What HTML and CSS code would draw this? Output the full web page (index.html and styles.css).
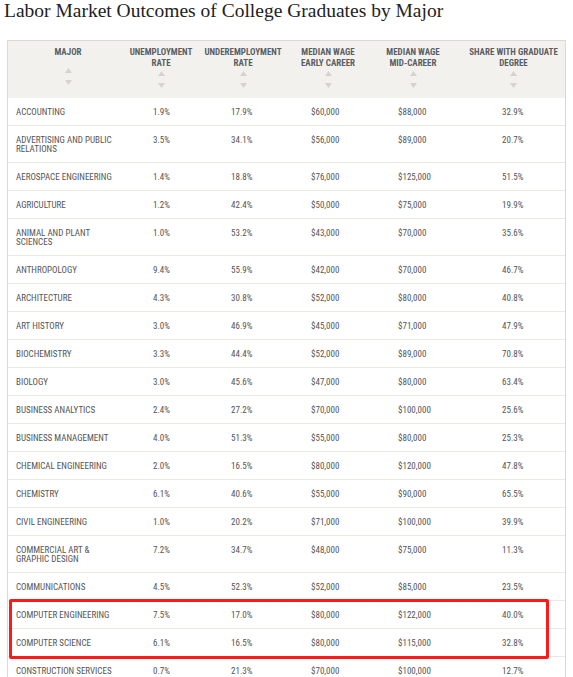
FILE: index.html
```html
<!DOCTYPE html>
<html lang="en">
<head>
<meta charset="utf-8">
<title>Labor Market Outcomes of College Graduates by Major</title>
<link rel="stylesheet" href="styles.css">
</head>
<body>
<h1 class="title">Labor Market Outcomes of College Graduates by Major</h1>
<div class="table">
  <div class="thead">
    <div class="th th-single"><div class="th-label">MAJOR</div><svg class="sort" width="7" height="17" viewBox="0 0 7 17"><path d="M3.5 0 L7 5 L0 5 Z"/><path d="M0 12 L7 12 L3.5 17 Z"/></svg></div>
    <div class="th"><div class="th-label">UNEMPLOYMENT<br>RATE</div><svg class="sort" width="7" height="17" viewBox="0 0 7 17"><path d="M3.5 0 L7 5 L0 5 Z"/><path d="M0 12 L7 12 L3.5 17 Z"/></svg></div>
    <div class="th"><div class="th-label">UNDEREMPLOYMENT<br>RATE</div><svg class="sort" width="7" height="17" viewBox="0 0 7 17"><path d="M3.5 0 L7 5 L0 5 Z"/><path d="M0 12 L7 12 L3.5 17 Z"/></svg></div>
    <div class="th"><div class="th-label">MEDIAN WAGE<br>EARLY CAREER</div><svg class="sort" width="7" height="17" viewBox="0 0 7 17"><path d="M3.5 0 L7 5 L0 5 Z"/><path d="M0 12 L7 12 L3.5 17 Z"/></svg></div>
    <div class="th"><div class="th-label">MEDIAN WAGE<br>MID-CAREER</div><svg class="sort" width="7" height="17" viewBox="0 0 7 17"><path d="M3.5 0 L7 5 L0 5 Z"/><path d="M0 12 L7 12 L3.5 17 Z"/></svg></div>
    <div class="th"><div class="th-label">SHARE WITH GRADUATE<br>DEGREE</div><svg class="sort" width="7" height="17" viewBox="0 0 7 17"><path d="M3.5 0 L7 5 L0 5 Z"/><path d="M0 12 L7 12 L3.5 17 Z"/></svg></div>
  </div>
  <div class="tbody">
    <div class="row"><div class="cell major">ACCOUNTING</div><div class="cell">1.9%</div><div class="cell">17.9%</div><div class="cell">$60,000</div><div class="cell">$88,000</div><div class="cell">32.9%</div></div>
    <div class="row"><div class="cell major">ADVERTISING AND PUBLIC RELATIONS</div><div class="cell">3.5%</div><div class="cell">34.1%</div><div class="cell">$56,000</div><div class="cell">$89,000</div><div class="cell">20.7%</div></div>
    <div class="row"><div class="cell major">AEROSPACE ENGINEERING</div><div class="cell">1.4%</div><div class="cell">18.8%</div><div class="cell">$76,000</div><div class="cell">$125,000</div><div class="cell">51.5%</div></div>
    <div class="row"><div class="cell major">AGRICULTURE</div><div class="cell">1.2%</div><div class="cell">42.4%</div><div class="cell">$50,000</div><div class="cell">$75,000</div><div class="cell">19.9%</div></div>
    <div class="row"><div class="cell major">ANIMAL AND PLANT SCIENCES</div><div class="cell">1.0%</div><div class="cell">53.2%</div><div class="cell">$43,000</div><div class="cell">$70,000</div><div class="cell">35.6%</div></div>
    <div class="row"><div class="cell major">ANTHROPOLOGY</div><div class="cell">9.4%</div><div class="cell">55.9%</div><div class="cell">$42,000</div><div class="cell">$70,000</div><div class="cell">46.7%</div></div>
    <div class="row"><div class="cell major">ARCHITECTURE</div><div class="cell">4.3%</div><div class="cell">30.8%</div><div class="cell">$52,000</div><div class="cell">$80,000</div><div class="cell">40.8%</div></div>
    <div class="row"><div class="cell major">ART HISTORY</div><div class="cell">3.0%</div><div class="cell">46.9%</div><div class="cell">$45,000</div><div class="cell">$71,000</div><div class="cell">47.9%</div></div>
    <div class="row"><div class="cell major">BIOCHEMISTRY</div><div class="cell">3.3%</div><div class="cell">44.4%</div><div class="cell">$52,000</div><div class="cell">$89,000</div><div class="cell">70.8%</div></div>
    <div class="row"><div class="cell major">BIOLOGY</div><div class="cell">3.0%</div><div class="cell">45.6%</div><div class="cell">$47,000</div><div class="cell">$80,000</div><div class="cell">63.4%</div></div>
    <div class="row"><div class="cell major">BUSINESS ANALYTICS</div><div class="cell">2.4%</div><div class="cell">27.2%</div><div class="cell">$70,000</div><div class="cell">$100,000</div><div class="cell">25.6%</div></div>
    <div class="row"><div class="cell major">BUSINESS MANAGEMENT</div><div class="cell">4.0%</div><div class="cell">51.3%</div><div class="cell">$55,000</div><div class="cell">$80,000</div><div class="cell">25.3%</div></div>
    <div class="row"><div class="cell major">CHEMICAL ENGINEERING</div><div class="cell">2.0%</div><div class="cell">16.5%</div><div class="cell">$80,000</div><div class="cell">$120,000</div><div class="cell">47.8%</div></div>
    <div class="row"><div class="cell major">CHEMISTRY</div><div class="cell">6.1%</div><div class="cell">40.6%</div><div class="cell">$55,000</div><div class="cell">$90,000</div><div class="cell">65.5%</div></div>
    <div class="row"><div class="cell major">CIVIL ENGINEERING</div><div class="cell">1.0%</div><div class="cell">20.2%</div><div class="cell">$71,000</div><div class="cell">$100,000</div><div class="cell">39.9%</div></div>
    <div class="row"><div class="cell major">COMMERCIAL ART &amp; GRAPHIC DESIGN</div><div class="cell">7.2%</div><div class="cell">34.7%</div><div class="cell">$48,000</div><div class="cell">$75,000</div><div class="cell">11.3%</div></div>
    <div class="row"><div class="cell major">COMMUNICATIONS</div><div class="cell">4.5%</div><div class="cell">52.3%</div><div class="cell">$52,000</div><div class="cell">$85,000</div><div class="cell">23.5%</div></div>
    <div class="highlight">
      <div class="row"><div class="cell major">COMPUTER ENGINEERING</div><div class="cell">7.5%</div><div class="cell">17.0%</div><div class="cell">$80,000</div><div class="cell">$122,000</div><div class="cell">40.0%</div></div>
      <div class="row"><div class="cell major">COMPUTER SCIENCE</div><div class="cell">6.1%</div><div class="cell">16.5%</div><div class="cell">$80,000</div><div class="cell">$115,000</div><div class="cell">32.8%</div></div>
    </div>
    <div class="row"><div class="cell major">CONSTRUCTION SERVICES</div><div class="cell">0.7%</div><div class="cell">21.3%</div><div class="cell">$70,000</div><div class="cell">$100,000</div><div class="cell">12.7%</div></div>
  </div>
</div>
</body>
</html>
```

FILE: styles.css
```css
html {
  overflow: hidden;
  background: #ffffff;
}

body {
  margin: 0;
  padding: 0;
  background: #ffffff;
}

.title {
  margin: 0;
  padding: 0 0 0 4px;
  font-family: "Liberation Serif", "Times New Roman", serif;
  font-size: 19.5px;
  font-weight: normal;
  line-height: 22px;
  color: #222222;
}

.table {
  box-sizing: border-box;
  width: 559px;
  margin: 18px 0 0 7px;
  border-left: 1px solid #dcd8d2;
  border-right: 1px solid #dcd8d2;
  border-top: 1px solid #dcd8d2;
  font-family: Roboto, "Liberation Sans", sans-serif;
  font-stretch: 85%;
}

.thead {
  display: grid;
  grid-template-columns: 120px 66px 98px 72px 98px 1fr;
  height: 57px;
  background: #f3f1ed;
  padding-top: 6px;
  box-sizing: border-box;
}

.th {
  display: flex;
  flex-direction: column;
  align-items: center;
}

.th-label {
  font-size: 9px;
  font-weight: 700;
  line-height: 11px;
  color: #5b5f65;
  text-align: center;
  white-space: nowrap;
}

.sort {
  display: block;
  margin-top: 2px;
  fill: #d6d3ce;
}

.th-single .sort {
  margin-top: 10px;
}

.row {
  display: grid;
  grid-template-columns: 145px 78px 80px 87px 104px 1fr;
  border-bottom: 1px solid #ece9e4;
}

.cell {
  padding: 10px 0 8px;
  font-size: 9px;
  line-height: 9px;
  color: #555555;
}

.major {
  padding-left: 8px;
  padding-right: 32px;
}

.highlight {
  position: relative;
}

.highlight::after {
  content: "";
  position: absolute;
  top: -2px;
  bottom: -2px;
  left: 1px;
  right: 16px;
  border: 3px solid #ff1a1a;
  border-radius: 2px;
  pointer-events: none;
}
```
